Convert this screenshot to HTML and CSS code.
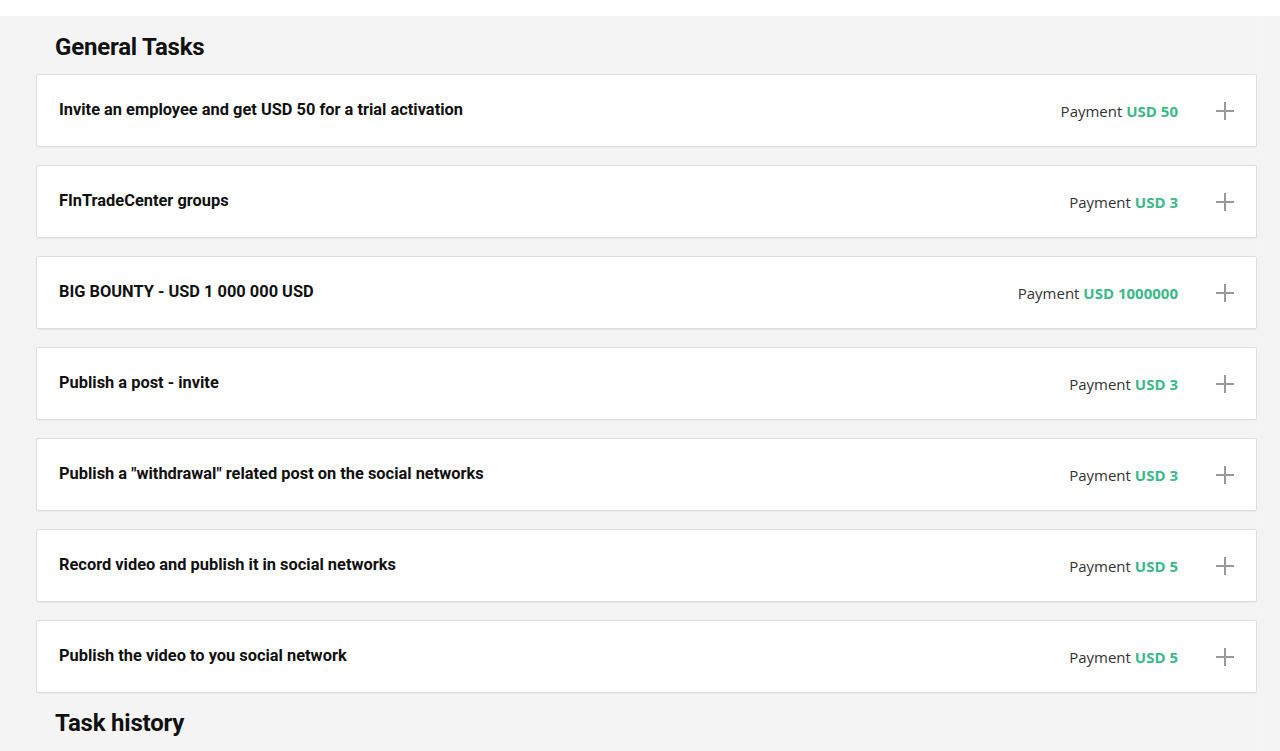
FILE: index.html
```html
<!DOCTYPE html>
<html lang="en">
<head>
<meta charset="utf-8">
<title>Tasks</title>
<link rel="stylesheet" href="styles.css">
</head>
<body>
<main class="page">
  <section class="panel">
    <h2 class="section-title">General Tasks</h2>
    <ul class="task-list">
      <li class="task">
        <span class="task-title">Invite an employee and get USD 50 for a trial activation</span>
        <span class="task-pay">Payment <b class="amount">USD 50</b></span>
        <span class="plus" aria-hidden="true"></span>
      </li>
      <li class="task">
        <span class="task-title">FInTradeCenter groups</span>
        <span class="task-pay">Payment <b class="amount">USD 3</b></span>
        <span class="plus" aria-hidden="true"></span>
      </li>
      <li class="task">
        <span class="task-title">BIG BOUNTY - USD 1 000 000 USD</span>
        <span class="task-pay">Payment <b class="amount">USD 1000000</b></span>
        <span class="plus" aria-hidden="true"></span>
      </li>
      <li class="task">
        <span class="task-title">Publish a post - invite</span>
        <span class="task-pay">Payment <b class="amount">USD 3</b></span>
        <span class="plus" aria-hidden="true"></span>
      </li>
      <li class="task">
        <span class="task-title">Publish a "withdrawal" related post on the social networks</span>
        <span class="task-pay">Payment <b class="amount">USD 3</b></span>
        <span class="plus" aria-hidden="true"></span>
      </li>
      <li class="task">
        <span class="task-title">Record video and publish it in social networks</span>
        <span class="task-pay">Payment <b class="amount">USD 5</b></span>
        <span class="plus" aria-hidden="true"></span>
      </li>
      <li class="task">
        <span class="task-title">Publish the video to you social network</span>
        <span class="task-pay">Payment <b class="amount">USD 5</b></span>
        <span class="plus" aria-hidden="true"></span>
      </li>
    </ul>
    <h2 class="section-title history">Task history</h2>
  </section>
</main>
</body>
</html>
```
FILE: styles.css
```css
html, body {
  margin: 0;
  padding: 0;
  background: #ffffff;
}
body {
  font-family: Roboto, "Liberation Sans", Arial, sans-serif;
  color: #111;
}
.page {
  margin-top: 16px;
  background: #f3f3f3;
  min-height: 735px;
  padding: 0 20px 0 33px;
}
.panel {
  background: #f4f4f4;
  padding: 0 3px;
  min-height: 735px;
}
.section-title {
  margin: 0;
  padding: 17px 0 13px 19px;
  font-size: 24px;
  line-height: 28px;
  font-weight: 700;
  color: #111;
  letter-spacing: -0.2px;
}
.section-title.history {
  padding-top: 16px;
}
.task-list {
  list-style: none;
  margin: 0;
  padding: 0;
  display: flex;
  flex-direction: column;
  gap: 18px;
}
.task {
  display: flex;
  align-items: center;
  height: 71px;
  background: #fff;
  border: 1px solid #dedede;
  border-radius: 2px;
  box-shadow: 0 1px 1px rgba(0,0,0,0.04);
  padding: 0 22px 0 22px;
}
.task-title {
  flex: 1;
  font-size: 16.4px;
  font-weight: 700;
  color: #111;
  margin-bottom: 2px;
}
.task-pay {
  font-family: "Open Sans", "Liberation Sans", sans-serif;
  font-size: 15px;
  color: #333;
  margin-right: 1px;
}
.amount {
  color: #3cb88a;
  font-weight: 700;
}
.plus {
  position: relative;
  width: 18px;
  height: 18px;
  margin-left: 37px;
}
.plus::before,
.plus::after {
  content: "";
  position: absolute;
  background: #999;
}
.plus::before {
  left: 0;
  top: 8px;
  width: 18px;
  height: 2px;
}
.plus::after {
  left: 8px;
  top: 0;
  width: 2px;
  height: 18px;
}
```
